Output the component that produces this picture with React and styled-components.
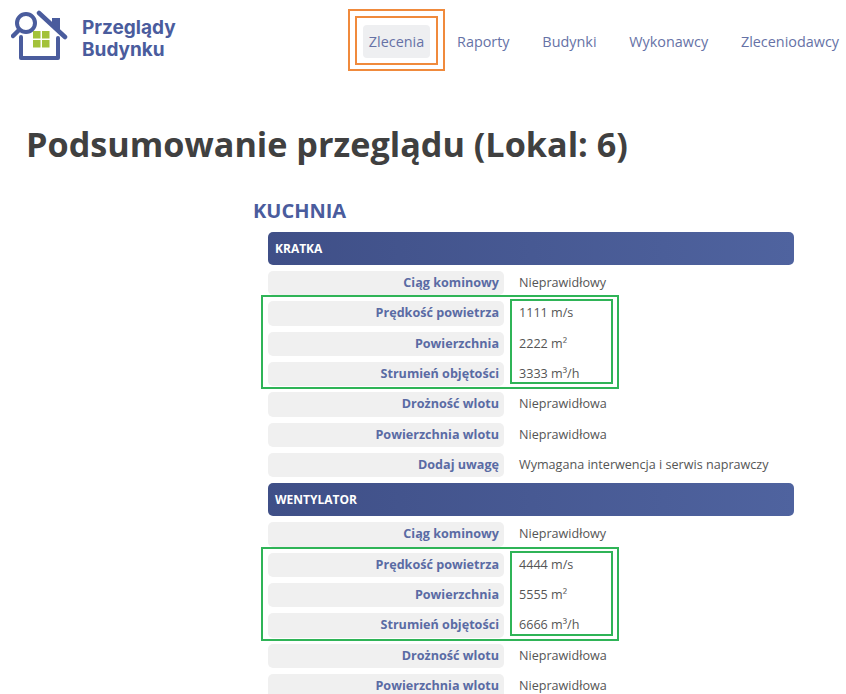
import React from 'react';
import styled, { createGlobalStyle } from 'styled-components';

const kratka = [
  ['Prędkość powietrza', '1111 m/s'],
  ['Powierzchnia', '2222 m²'],
  ['Strumień objętości', '3333 m³/h'],
];

const wentylator = [
  ['Prędkość powietrza', '4444 m/s'],
  ['Powierzchnia', '5555 m²'],
  ['Strumień objętości', '6666 m³/h'],
];

const navItems = ['Raporty', 'Budynki', 'Wykonawcy', 'Zleceniodawcy'];

const Row = ({ label, value }) => (
  <RowWrap>
    <Label>{label}</Label>
    <Value>{value}</Value>
  </RowWrap>
);

const Measured = ({ rows }) => (
  <Group>
    {rows.map(([label, value]) => (
      <Row key={label} label={label} value={value} />
    ))}
    <GreenOuter />
    <GreenInner />
  </Group>
);

const Logo = () => (
  <svg width="58" height="52" viewBox="0 0 58 52" fill="none">
    <g stroke="#4a5c9d" strokeWidth="4" strokeLinecap="round" strokeLinejoin="round">
      <circle cx="15" cy="13" r="9" />
      <path d="M8 20 L2 26" strokeWidth="4.5" />
      <path d="M28 3 L54 27" strokeWidth="4.5" />
      <path d="M10 27 V48 H47 V28" />
    </g>
    <path d="M41 8 H49 V21 L41 14 Z" fill="#4a5c9d" />
    <g fill="#a3c23a">
      <rect x="22" y="21" width="7.5" height="7.5" />
      <rect x="31" y="21" width="7.5" height="7.5" />
      <rect x="22" y="30" width="7.5" height="7.5" />
      <rect x="31" y="30" width="7.5" height="7.5" />
    </g>
  </svg>
);

export default function App() {
  return (
    <Page>
      <GlobalStyle />
      <Header>
        <Brand>
          <Logo />
          <BrandName>
            Przeglądy
            <br />
            Budynku
          </BrandName>
        </Brand>
        <Nav>
          <NavItem $active>
            Zlecenia
            <OrangeInner />
            <OrangeOuter />
          </NavItem>
          {navItems.map((item) => (
            <NavItem key={item}>{item}</NavItem>
          ))}
        </Nav>
      </Header>
      <Title>Podsumowanie przeglądu (Lokal: 6)</Title>
      <Section>
        <SectionTitle>KUCHNIA</SectionTitle>
        <Table>
          <TableHead>KRATKA</TableHead>
          <Row label="Ciąg kominowy" value="Nieprawidłowy" />
          <Measured rows={kratka} />
          <Row label="Drożność wlotu" value="Nieprawidłowa" />
          <Row label="Powierzchnia wlotu" value="Nieprawidłowa" />
          <Row label="Dodaj uwagę" value="Wymagana interwencja i serwis naprawczy" />
          <TableHead>WENTYLATOR</TableHead>
          <Row label="Ciąg kominowy" value="Nieprawidłowy" />
          <Measured rows={wentylator} />
          <Row label="Drożność wlotu" value="Nieprawidłowa" />
          <Row label="Powierzchnia wlotu" value="Nieprawidłowa" />
        </Table>
      </Section>
    </Page>
  );
}

const GlobalStyle = createGlobalStyle`
  html, body {
    margin: 0;
    height: 100%;
    overflow: hidden;
    background: #fff;
  }
`;

const Page = styled.div`
  font-family: "Open Sans", "Liberation Sans", sans-serif;
  color: #404040;
`;

const Header = styled.header`
  display: flex;
  align-items: flex-start;
  justify-content: space-between;
  height: 100px;
  padding: 10px 1px 0 11px;
  box-sizing: border-box;
`;

const Brand = styled.div`
  display: flex;
  gap: 13px;
`;

const BrandName = styled.div`
  font-family: "Inter", "Liberation Sans", sans-serif;
  font-size: 19px;
  font-weight: 700;
  line-height: 22px;
  color: #4a5c9d;
  padding-top: 7px;
`;

const Nav = styled.nav`
  display: flex;
  gap: 20.8px;
  margin-top: 15px;
`;

const NavItem = styled.div`
  position: relative;
  height: 33px;
  padding: 0 6px;
  line-height: 33px;
  font-size: 14.4px;
  color: #6672a6;
  border-radius: 4px;
  background: ${(p) => (p.$active ? '#eeeff1' : 'transparent')};
`;

const OrangeInner = styled.span`
  position: absolute;
  top: -9px;
  bottom: -7px;
  left: -8px;
  right: -8px;
  border: 2px solid #f08a3c;
`;

const OrangeOuter = styled.span`
  position: absolute;
  top: -16px;
  bottom: -13px;
  left: -15px;
  right: -15px;
  border: 2px solid #f08a3c;
`;

const Title = styled.h1`
  margin: 0 0 0 26px;
  font-size: 34.2px;
  line-height: 44px;
  font-weight: 700;
  color: #404040;
  padding-top: 22px;
`;

const Section = styled.section`
  margin: 31px 0 0 253px;
`;

const SectionTitle = styled.h2`
  margin: 0;
  font-size: 20px;
  line-height: 27px;
  font-weight: 700;
  color: #4a5c9d;
`;

const Table = styled.div`
  display: flex;
  flex-direction: column;
  gap: 6px;
  width: 526px;
  margin: 8px 0 0 15px;
`;

const TableHead = styled.div`
  height: 33px;
  padding-left: 7px;
  box-sizing: border-box;
  line-height: 33px;
  font-size: 12px;
  font-weight: 700;
  color: #fff;
  border-radius: 5px;
  background: linear-gradient(90deg, #3f4f87 0%, #4f639f 100%);
`;

const Group = styled.div`
  position: relative;
  display: flex;
  flex-direction: column;
  gap: 6px;
`;

const RowWrap = styled.div`
  display: grid;
  grid-template-columns: 236px 1fr;
  height: 24.33px;
  line-height: 24px;
  font-size: 12.6px;
`;

const Label = styled.div`
  padding-right: 5px;
  text-align: right;
  font-weight: 700;
  color: #5a6ba4;
  background: #f0f0f0;
  border-radius: 5px;
`;

const Value = styled.div`
  padding-left: 15px;
  color: #555;
`;

const GreenOuter = styled.span`
  position: absolute;
  top: -6px;
  bottom: -3px;
  left: -7px;
  width: 358px;
  box-sizing: border-box;
  border: 2px solid #2fb457;
`;

const GreenInner = styled.span`
  position: absolute;
  top: -2px;
  bottom: 2px;
  left: 242px;
  width: 103px;
  box-sizing: border-box;
  border: 2px solid #2fb457;
`;
